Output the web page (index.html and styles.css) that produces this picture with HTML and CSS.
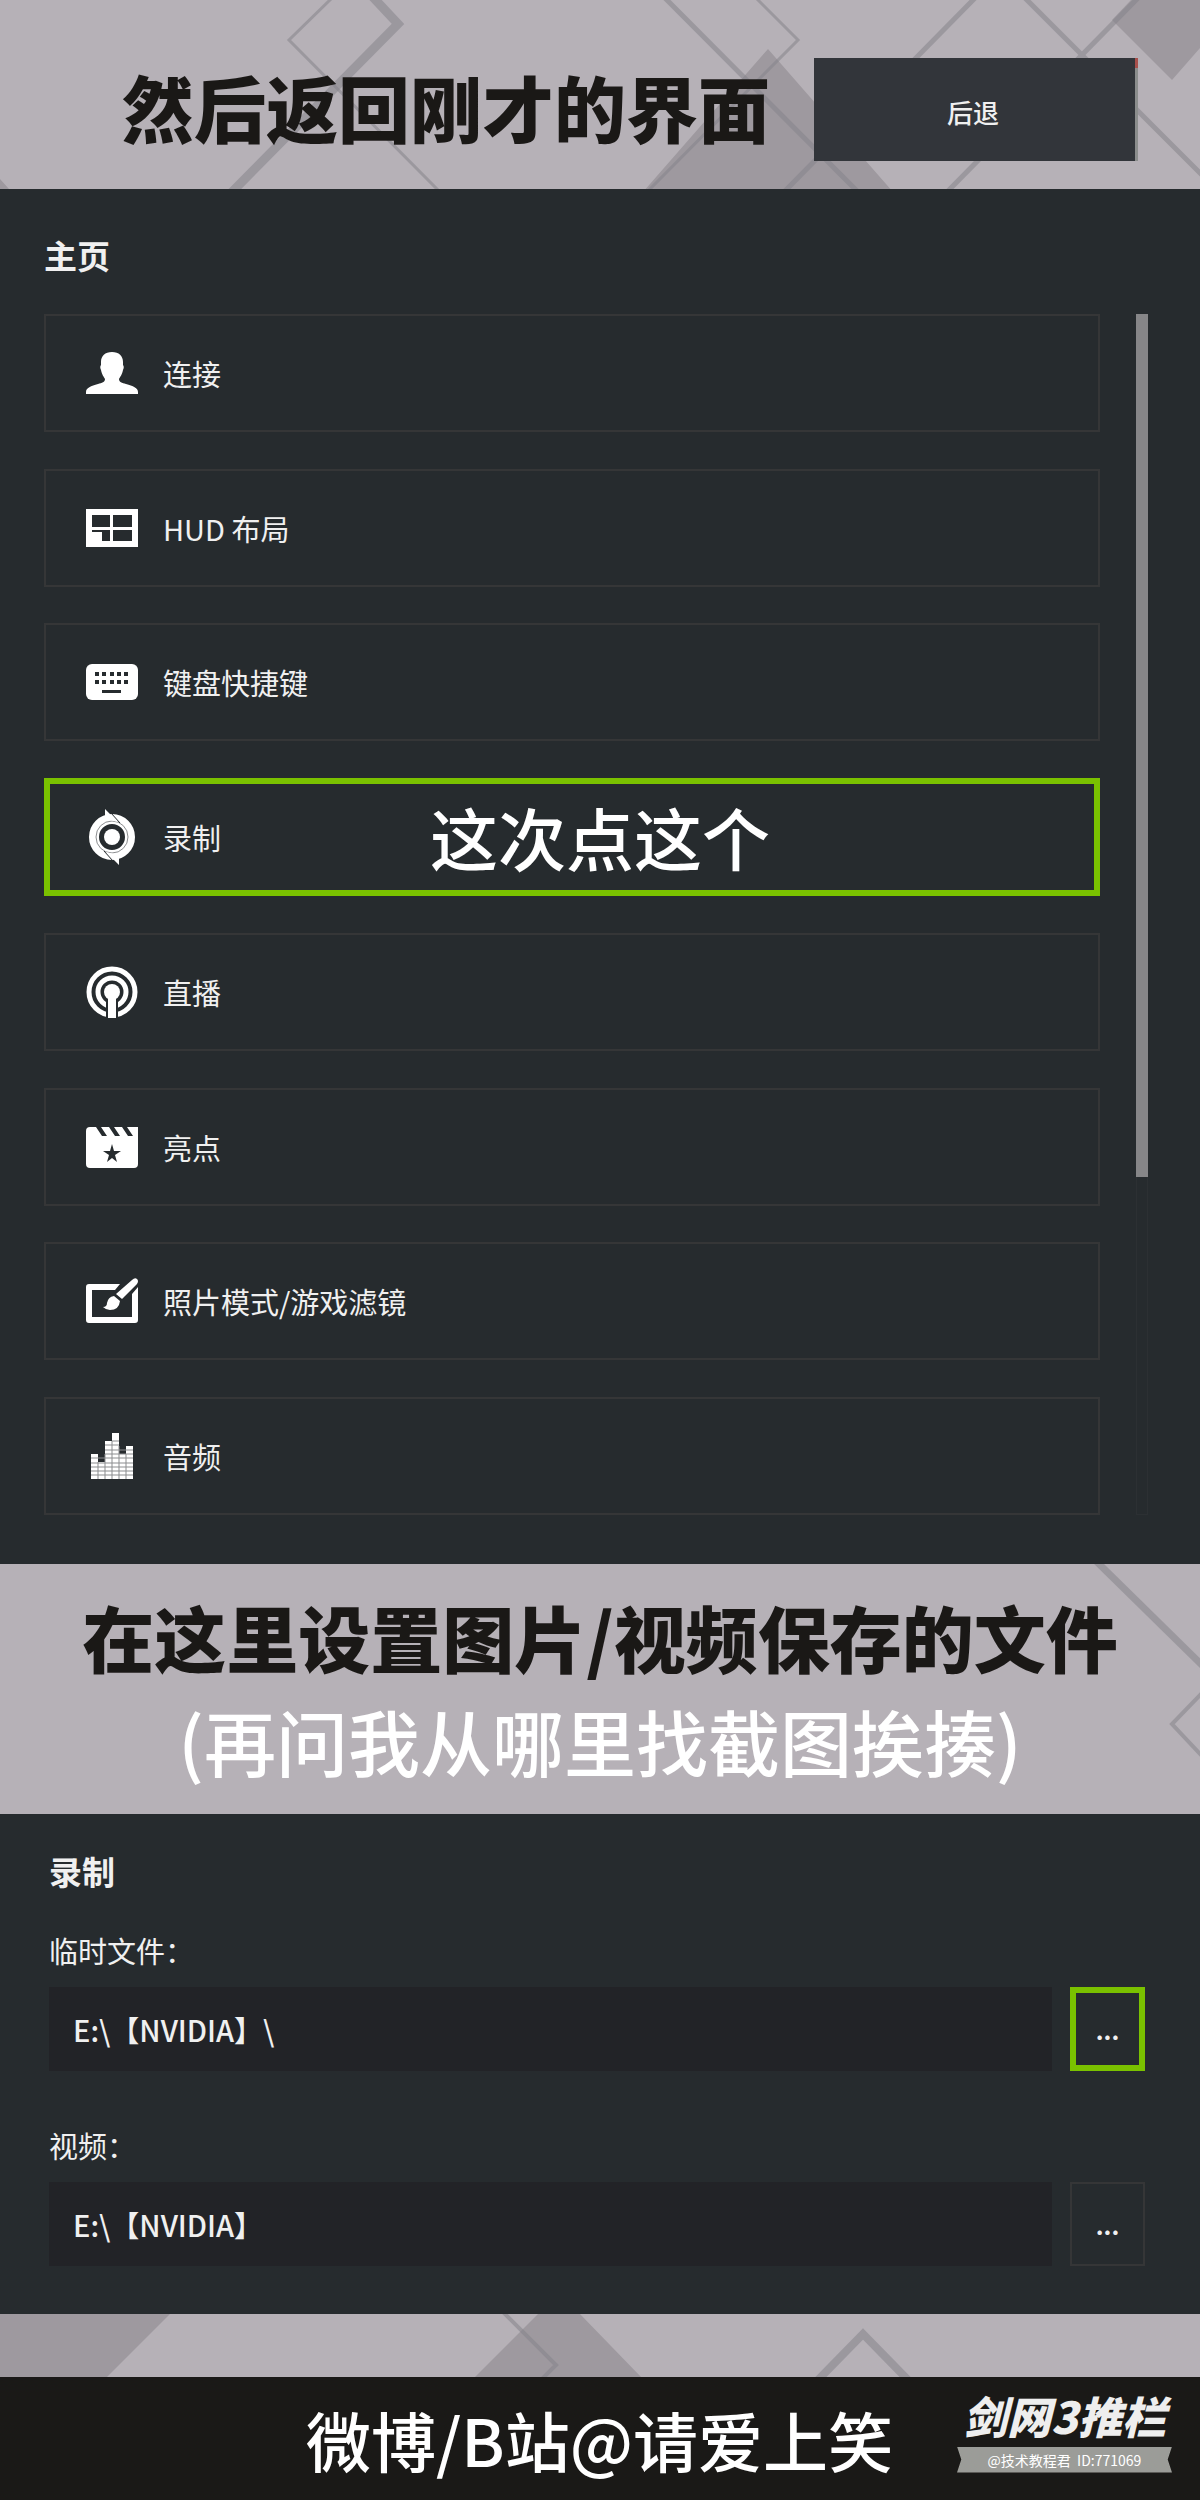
FILE: index.html
```
<!DOCTYPE html>
<html lang="zh-CN">
<head>
  <meta charset="UTF-8">
  <meta name="viewport" content="width=device-width, initial-scale=1.0">
  <title>录制设置教程</title>
  <link rel="stylesheet" href="styles.css">
</head>
<body>
  <!-- Step 1 -->
  <header class="banner banner-top">
    <svg class="pattern" viewBox="0 0 1200 189" preserveAspectRatio="xMidYMid slice" aria-hidden="true">
      <path class="solid" d="M0 179l9 10H0zM768 49l139 159H629zM1131 0l-19 20 60 60 28-32V0z"/>
      <g class="lines">
        <path stroke-width="3" d="M331 -1L289 40 438 190M757 -1l41 41-149 150"/>
        <path stroke-width="9" d="M370 -6l28 30-170 172"/>
        <path stroke-width="5" d="M665 -2l193 194M975 -2L784 192M1025 -2l178 178M1138 -2L947 192"/>
      </g>
    </svg>
    <h1>然后返回刚才的界面</h1>
    <button class="back-btn" type="button">后退</button>
  </header>

  <section class="panel home">
    <h2>主页</h2>
    <div class="scroller">
      <ul class="menu">
        <li>
          <button class="menu-item" type="button">
            <svg class="icon" viewBox="0 0 52 56"><path d="M26 7c-7 0-11 4-11 10v3c-1 1-1 3 0 5 1 5 3 7 4 9 0 3-3 4-7 5C5 41 0 43 0 47v2h52v-2c0-4-5-6-12-8-4-1-7-2-7-5 1-2 3-4 4-9 1-2 1-4 0-5v-3c0-6-4-10-11-10z"/></svg>
            <span>连接</span>
          </button>
        </li>
        <li>
          <button class="menu-item" type="button">
            <svg class="icon" viewBox="0 0 52 56">
              <path d="M0 9h52v38H0z"/>
              <path class="cut" d="M6 15h18v12H6zM27 15h19v12H27zM27 30h19v11H27zM6 30h18v11h-8v-9H6z"/>
            </svg>
            <span>HUD 布局</span>
          </button>
        </li>
        <li>
          <button class="menu-item" type="button">
            <svg class="icon" viewBox="0 0 52 56">
              <rect y="10" width="52" height="36" rx="6"/>
              <path class="cut" d="M9 18h4v4H9zM16 18h4v4h-4zM24 18h4v4h-4zM31 18h4v4h-4zM38 18h4v4h-4zM9 26h4v4H9zM16 26h4v4h-4zM24 26h4v4h-4zM31 26h4v4h-4zM38 26h4v4h-4zM16 36h19v3H16z"/>
            </svg>
            <span>键盘快捷键</span>
          </button>
        </li>
        <li>
          <button class="menu-item active" type="button">
            <svg class="icon" viewBox="0 0 52 56">
              <circle class="ring" cx="26" cy="28" r="18" stroke-width="10"/>
              <circle class="ring dim" cx="26" cy="28" r="16" stroke-width="1"/>
              <circle cx="26" cy="28" r="8"/>
              <path d="M19 0l13 13-13-3zM33 56L20 43l13 3z"/>
              <path class="slit" d="M25 4l9 10M27 52l-9-10"/>
            </svg>
            <span>录制</span>
            <strong class="note">这次点这个</strong>
          </button>
        </li>
        <li>
          <button class="menu-item" type="button">
            <svg class="icon" viewBox="0 0 52 56">
              <circle class="ring" cx="26" cy="28" r="23" stroke-width="5"/>
              <circle class="ring" cx="26" cy="28" r="14" stroke-width="5"/>
              <path class="cut" d="M20 30h12v25H20z"/>
              <circle cx="26" cy="28" r="8"/>
              <path d="M22 30h8v24h-8z"/>
            </svg>
            <span>直播</span>
          </button>
        </li>
        <li>
          <button class="menu-item" type="button">
            <svg class="icon" viewBox="0 0 52 56">
              <path d="M4 8h6l6 9h5l-6-9h8l6 9h5l-6-9h8l6 9h5l-6-9h11v37q0 4-4 4H4q-4 0-4-4V12q0-4 4-4z"/>
              <path class="cut" d="M26 25l2 7h7l-6 4 2 7-5-4-5 4 2-7-6-4h7z"/>
            </svg>
            <span>亮点</span>
          </button>
        </li>
        <li>
          <button class="menu-item" type="button">
            <svg class="icon" viewBox="0 0 52 56">
              <path fill-rule="evenodd" d="M3 11h31l-5 6H6v27h40V21l6-7v33q0 3-3 3H3q-3 0-3-3V14q0-3 3-3z"/>
              <path d="M46 7q3-3 5-1t0 5L36 26l-6-5zM28 23l6 5q-1 9-10 9-4 0-7-3 4 0 4-4 1-6 7-7z"/>
            </svg>
            <span>照片模式/游戏滤镜</span>
          </button>
        </li>
        <li>
          <button class="menu-item" type="button">
            <svg class="icon" viewBox="0 0 52 56">
              <path d="M5 26h7v8h7V13h7V5h7v21h7v-8h7v33H5z"/>
              <path class="grid" d="M5 47h42M5 43h42M5 39h42M5 35h42M5 30h42M19 26h28M19 22h28M19 17h14M26 13h7M12 34v17M19 26v25M26 13v38M33 18v33M40 26v25"/>
            </svg>
            <span>音频</span>
          </button>
        </li>
      </ul>
      <div class="scrollbar"><div class="thumb"></div></div>
    </div>
  </section>

  <!-- Step 2 -->
  <section class="banner banner-middle">
    <svg class="pattern" viewBox="0 0 1200 250" preserveAspectRatio="xMidYMid slice" aria-hidden="true">
      <g class="lines">
        <path stroke-width="7" d="M1095 -4l110 108"/>
        <path stroke-width="4" d="M1203 128l-31 32 31 33"/>
      </g>
    </svg>
    <h1>在这里设置图片/视频保存的文件</h1>
    <p class="aside">(再问我从哪里找截图挨揍)</p>
  </section>

  <section class="panel record">
    <h2>录制</h2>
    <div class="field">
      <label for="tempPath">临时文件：</label>
      <div class="field-row">
        <input type="text" id="tempPath" value="E:\【NVIDIA】\">
        <button class="browse active" type="button" aria-label="浏览临时文件">...</button>
      </div>
    </div>
    <div class="field">
      <label for="videoPath">视频：</label>
      <div class="field-row">
        <input type="text" id="videoPath" value="E:\【NVIDIA】">
        <button class="browse" type="button" aria-label="浏览视频">...</button>
      </div>
    </div>
  </section>

  <div class="banner banner-bottom">
    <svg class="pattern" viewBox="0 0 1200 63" preserveAspectRatio="xMidYMid slice" aria-hidden="true">
      <path class="solid" d="M0 0h170l-63 63H0zM538 0h42l61 63H475z"/>
      <g class="lines">
        <path stroke-width="4" d="M503 -2l53 53-14 14"/>
        <path stroke-width="8" d="M816 68l47-48 47 48"/>
      </g>
    </svg>
  </div>

  <footer class="footer">
    <p class="credit">微博/B站@请爱上笑</p>
    <div class="brand">
      <span class="brand-name">剑网3推栏</span>
      <span class="ribbon">@技术教程君&nbsp; ID:771069</span>
    </div>
  </footer>
</body>
</html>
```
FILE: styles.css
```
* {
  box-sizing: border-box;
}

body {
  margin: 0;
  background-color: #1a1917;
  color: #f0f0f0;
  font-family: "Noto Sans CJK SC", sans-serif;
  font-size: 29px;
}

h1, h2, p, ul {
  margin: 0;
  padding: 0;
}

h1 {
  padding-bottom: 8px;
  font-size: 72px;
  font-weight: 900;
  line-height: 80px;
  color: #1a1816;
  white-space: nowrap;
}

h2 {
  font-size: 33px;
  font-weight: 700;
  line-height: 40px;
}

button, input {
  font-family: inherit;
  color: inherit;
}

button {
  cursor: pointer;
}

/* Light banners with the diamond pattern */
.banner {
  position: relative;
  background-color: #b6b1b7;
  overflow: hidden;
}

.banner h1, .banner p, .banner button {
  position: relative;
}

.pattern {
  position: absolute;
  top: 0;
  left: 0;
  width: 100%;
  height: 100%;
}

.solid {
  fill: #9e999f;
}

.lines {
  fill: none;
  stroke: #85848a;
  stroke-opacity: 0.55;
}

.banner-top {
  display: flex;
  align-items: center;
  justify-content: space-between;
  height: 189px;
  padding: 30px 62px 0 122px;
}

.back-btn {
  width: 324px;
  height: 103px;
  padding: 4px 6px 0 0;
  border: none;
  background:
    linear-gradient(#a8504c 10px, #8b8d8c 10px) right / 3px 100% no-repeat,
    #32353a;
  font-size: 26px;
  font-weight: 500;
}

.banner-middle {
  height: 250px;
  padding-top: 32px;
  text-align: center;
}

.aside {
  font-size: 72px;
  font-weight: 500;
  line-height: 112px;
  color: #fff;
}

.banner-bottom {
  height: 63px;
}

/* Dark panels */
.panel {
  background-color: #262b2e;
}

.home {
  padding: 46px 52px 49px 44px;
}

.scroller {
  display: flex;
  justify-content: space-between;
  height: 1201px;
  margin-top: 39px;
}

.menu {
  display: flex;
  flex: 1;
  flex-direction: column;
  justify-content: space-between;
  list-style: none;
}

.menu-item {
  position: relative;
  display: flex;
  align-items: center;
  gap: 25px;
  width: 100%;
  height: 118px;
  padding: 0 40px;
  border: 2px solid #353637;
  background: none;
  font-size: 29px;
  text-align: left;
}

.menu-item.active {
  padding: 0 36px;
  border: 6px solid #7ac100;
}

.note {
  position: absolute;
  left: 56px;
  right: 0;
  font-size: 68px;
  font-weight: 500;
  line-height: 80px;
  color: #fff;
  text-align: center;
}

.icon {
  flex: none;
  width: 52px;
  height: 56px;
  fill: #fff;
}

.icon .cut {
  fill: #262b2e;
}

.ring {
  fill: none;
  stroke: #fff;
}

.ring.dim {
  stroke: #8b8d8f;
}

.slit {
  stroke: #262b2e;
  stroke-width: 1;
}

.grid {
  stroke: #8b8d8f;
  stroke-width: 1;
}

.scrollbar {
  width: 12px;
  margin-left: 36px;
  border: 1px solid #2c3033;
}

.thumb {
  height: 72%;
  margin: -1px;
  background-color: #868688;
}

.record {
  height: 500px;
  padding: 37px 55px 0 49px;
}

.field {
  margin-top: 52px;
}

.record h2 + .field {
  margin-top: 37px;
}

.field label {
  display: block;
  margin-bottom: 15px;
  line-height: 44px;
}

.field-row {
  display: flex;
  gap: 18px;
}

.field input {
  flex: 1;
  min-width: 0;
  height: 84px;
  padding: 0 24px;
  border: none;
  background-color: #222327;
  font-size: 29px;
  font-weight: 500;
}

.browse {
  width: 75px;
  height: 84px;
  border: 2px solid #353637;
  background: none;
  font-size: 24px;
  font-weight: 700;
}

.browse.active {
  border: 6px solid #7ac100;
}

/* Footer */
.footer {
  display: flex;
  align-items: center;
  justify-content: space-between;
  height: 123px;
  padding: 0 28px 0 306px;
}

.credit {
  font-size: 65px;
  font-weight: 500;
  line-height: 80px;
  color: #fff;
  white-space: nowrap;
}

.brand {
  display: flex;
  flex-direction: column;
  align-items: center;
  width: 215px;
  padding-bottom: 14px;
}

.brand-name {
  margin-bottom: 8px;
  font-size: 44px;
  font-style: italic;
  font-weight: 900;
  line-height: 48px;
  color: #eee;
  white-space: nowrap;
}

.ribbon {
  width: 100%;
  background-color: #9b9c98;
  clip-path: polygon(0 0, 100% 0, 98% 50%, 100% 100%, 0 100%, 2% 50%);
  font-size: 14px;
  line-height: 26px;
  color: #fff;
  text-align: center;
  white-space: nowrap;
}
```
